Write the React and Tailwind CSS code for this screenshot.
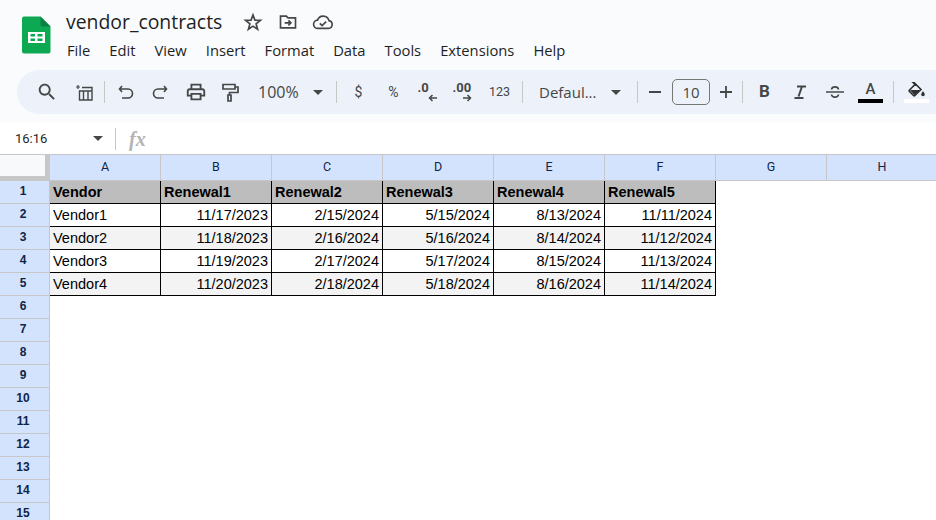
import React from "react";

const columns = ["A", "B", "C", "D", "E", "F", "G", "H"];
const rows = [
  ["Vendor", "Renewal1", "Renewal2", "Renewal3", "Renewal4", "Renewal5"],
  ["Vendor1", "11/17/2023", "2/15/2024", "5/15/2024", "8/13/2024", "11/11/2024"],
  ["Vendor2", "11/18/2023", "2/16/2024", "5/16/2024", "8/14/2024", "11/12/2024"],
  ["Vendor3", "11/19/2023", "2/17/2024", "5/17/2024", "8/15/2024", "11/13/2024"],
  ["Vendor4", "11/20/2023", "2/18/2024", "5/18/2024", "8/16/2024", "11/14/2024"],
];
const menus = ["File", "Edit", "View", "Insert", "Format", "Data", "Tools", "Extensions", "Help"];

const Icon = ({ children, className = "", size = 24, box = 24 }) => (
  <svg width={size} height={size} viewBox={`0 0 ${box} ${box}`} className={`shrink-0 ${className}`} fill="none" stroke="#444746" strokeWidth="2">
    {children}
  </svg>
);

const Solid = ({ d }) => <path d={d} fill="#444746" stroke="none" />;

const Sep = ({ className = "" }) => <div className={`h-[22px] w-px shrink-0 bg-[#c7c7c7] ${className}`} />;

const Caret = ({ className = "" }) => (
  <div className={`h-0 w-0 shrink-0 border-x-[5px] border-t-[5px] border-x-transparent border-t-[#444746] ${className}`} />
);

const Slot = ({ w, children, className = "" }) => (
  <div className={`flex h-full shrink-0 items-center justify-center ${w} ${className}`}>{children}</div>
);

const SheetsLogo = () => (
  <svg width="29" height="38" viewBox="0 0 29 38" className="shrink-0">
    <path d="M2 0.500H18.500L28.500 10.500V35.500a2 2 0 0 1-2 2H2a2 2 0 0 1-2-2V2.500A2 2 0 0 1 2 0.500Z" fill="#0da952" />
    <path d="M18.500 0.500L28.500 10.500H20.500a2 2 0 0 1-2-2Z" fill="#0a8043" />
    <path d="M6 16H23V27H6ZM8.500 18V20.500H13V18ZM15.500 18V20.500H20.500V18ZM8.500 22.500V25H13V22.500ZM15.500 22.500V25H20.500V22.500Z" fill="#fff" fillRule="evenodd" />
  </svg>
);

const Toolbar = () => (
  <div className="mt-[8px] ml-[17px] flex h-[44px] items-center rounded-l-[22px] bg-[#edf2fa] text-[#444746]">
    <Slot w="w-[50px] pl-[9px]">
      <Icon size={22}>
        <Solid d="M15.500 14h-.790l-.280-.270C15.410 12.590 16 11.110 16 9.500 16 5.910 13.090 3 9.500 3S3 5.910 3 9.500 5.910 16 9.500 16c1.610 0 3.090-.590 4.230-1.570l.270.280v.790l5 4.990L20.490 19l-4.990-5zm-6 0C7.010 14 5 11.990 5 9.500S7.010 5 9.500 5 14 7.010 14 9.500 11.990 14 9.500 14z" />
      </Icon>
    </Slot>
    <Slot w="w-[35px]">
      <Icon size={18} box={18} className="mt-[1px]">
        <path d="M6 3.500H16V16H3.500V7H16M7.500 7.500V16M12 7.500V16" strokeWidth="1.400" />
        <path d="M0 3H4M2 1V5" strokeWidth="1.200" />
      </Icon>
    </Slot>
    <Sep className="ml-[2px]" />
    <Slot w="w-[42px]">
      <Icon size={18} box={18}>
        <path d="M5 3L2.500 6 5 9M3 6H11a3.800 3.800 0 0 1 0 9H5" strokeWidth="1.600" />
      </Icon>
    </Slot>
    <Slot w="w-[26px]">
      <Icon size={18} box={18}>
        <path d="M13 3L15.500 6 13 9M15 6H7a3.800 3.800 0 0 0 0 9H13" strokeWidth="1.600" />
      </Icon>
    </Slot>
    <Slot w="w-[45px]">
      <Icon size={22}>
        <Solid d="M19 8h-1V3H6v5H5c-1.660 0-3 1.340-3 3v6h4v4h12v-4h4v-6c0-1.660-1.340-3-3-3zM8 5h8v3H8V5zm8 12v2H8v-4h8v2zm2-2v-2H6v2H4v-4c0-.550.450-1 1-1h14c.550 0 1 .450 1 1v4h-2z" />
      </Icon>
    </Slot>
    <Slot w="w-[23px]">
      <Icon size={20} box={20}>
        <path d="M3 2.500H15V7H3ZM15 5H18V10.500H9.500V13M8 13H11V19H8Z" strokeWidth="1.700" />
      </Icon>
    </Slot>
    <div className="ml-[17px] w-[55px] shrink-0 text-[16px] font-['Open_Sans',sans-serif]">100%</div>
    <Caret />
    <Sep className="ml-[13px]" />
    <Slot w="w-[43px]" className="text-[14px] font-['Roboto',sans-serif]">$</Slot>
    <Slot w="w-[27px]" className="text-[14px] font-['Roboto',sans-serif]">%</Slot>
    <Slot w="w-[43px]">
      <div className="relative h-[22px] w-[24px] font-['Roboto',sans-serif] text-[13px] leading-[14px] font-bold">
        <span className="absolute top-0 left-[1px]">.0</span>
        <svg width="10" height="8" viewBox="0 0 10 8" className="absolute top-[13px] left-[11px]">
          <path d="M9 4H2M4.500 1L1.500 4 4.500 7" fill="none" stroke="#444746" strokeWidth="1.500" />
        </svg>
      </div>
    </Slot>
    <Slot w="w-[27px]">
      <div className="relative h-[22px] w-[24px] font-['Roboto',sans-serif] text-[13px] leading-[14px] font-bold">
        <span className="absolute top-0 left-[1px]">.00</span>
        <svg width="10" height="8" viewBox="0 0 10 8" className="absolute top-[13px] left-[10px]">
          <path d="M1 4H8M5.500 1L8.500 4 5.500 7" fill="none" stroke="#444746" strokeWidth="1.500" />
        </svg>
      </div>
    </Slot>
    <Slot w="w-[45px]" className="text-[12.500px] font-['Roboto',sans-serif]">123</Slot>
    <Sep />
    <div className="ml-[16px] w-[72px] shrink-0 text-[15px] font-['Open_Sans',sans-serif]">Defaul...</div>
    <Caret />
    <Sep className="ml-[16px]" />
    <Slot w="w-[34px]">
      <div className="h-[2px] w-[12px] bg-[#444746]" />
    </Slot>
    <div className="flex h-[26px] w-[38px] shrink-0 items-center justify-center rounded-[5px] border border-[#747775] font-['Open_Sans',sans-serif] text-[15px]">10</div>
    <Slot w="w-[32px]">
      <Icon size={14} box={14}>
        <path d="M1 7H13M7 1V13" strokeWidth="1.800" />
      </Icon>
    </Slot>
    <Sep />
    <Slot w="w-[43px]" className="font-['Roboto',sans-serif] text-[17px] font-bold">B</Slot>
    <Slot w="w-[28px]">
      <Icon size={14} box={14}>
        <path d="M4 1.500H13M9 1.500L5.500 11.500M1.500 13H10.500" strokeWidth="2" />
      </Icon>
    </Slot>
    <Slot w="w-[41px]">
      <Icon size={20} box={20}>
        <path d="M1 10H19" strokeWidth="1.500" />
        <path d="M6.500 7.500C7 4 13 4 13.500 7.500M6.500 12.500C7 16 13 16 13.500 12.500" strokeWidth="1.700" />
      </Icon>
    </Slot>
    <Slot w="w-[31px]">
      <div className="flex flex-col items-center">
        <span className="font-['Roboto',sans-serif] text-[15px] leading-[15px] font-medium">A</span>
        <div className="mt-[2px] h-[4px] w-[25px] bg-black" />
      </div>
    </Slot>
    <Sep className="ml-[7px]" />
    <Slot w="w-[45px]">
      <div className="flex flex-col items-center">
        <svg width="18" height="15" viewBox="0 0 18 15">
          <path d="M5 0.500L7 2.500 1.500 8a1 1 0 0 0 0 1.400L5.500 13.500a1 1 0 0 0 1.400 0L13 7.500 6 0.500Z" fill="none" stroke="#2f2f2f" strokeWidth="1.600" />
          <path d="M2 8H12L6.500 13.300Z" fill="#2f2f2f" />
          <path d="M15 9C15.700 10.300 16.800 11.300 16.800 12.500a1.800 1.800 0 0 1-3.600 0C13.200 11.300 14.300 10.300 15 9Z" fill="#2f2f2f" />
        </svg>
        <div className="mt-[2px] h-[4px] w-[25px] bg-white" />
      </div>
    </Slot>
  </div>
);

const FormulaBar = () => (
  <div className="flex h-[31px] items-center bg-white">
    <div className="ml-[15px] w-[78px] text-[13px] text-[#1f1f1f] font-['Roboto',sans-serif]">16:16</div>
    <Caret />
    <Sep className="ml-[12px] h-[18px]" />
    <span className="ml-[13px] font-['Liberation_Serif',serif] text-[20px] font-bold text-[#b4b4b4] italic">fx</span>
  </div>
);

const Grid = () => (
  <div className="grid grid-cols-[50px_repeat(8,111px)] grid-rows-[26px_repeat(15,23px)] border-t border-[#c7c7c7] font-['Liberation_Sans',sans-serif]">
    <div className="border-r-[5px] border-b-[5px] border-[#c7c7c7] bg-[#f8f9fa]" />
    {columns.map((c) => (
      <div key={c} className="flex items-center justify-center border-r border-b border-[#c7c7c7] bg-[#d3e3fd] font-['Roboto',sans-serif] text-[12.500px] text-[#0f2547]">
        {c}
      </div>
    ))}
    {Array.from({ length: 15 }, (_, r) => (
      <React.Fragment key={r}>
        <div className="flex items-center justify-center border-r border-b border-[#c7c7c7] bg-[#d3e3fd] pr-[3px] pb-[2px] text-[12px] font-bold text-[#0f2547]">
          {r + 1}
        </div>
        {columns.map((c, i) => {
          const text = rows[r] && rows[r][i];
          const header = r === 0;
          if (text === undefined) return <div key={c} className="bg-white" />;
          return (
            <div
              key={c}
              className={`flex items-center overflow-hidden border-r border-b border-black px-[3px] pt-[2px] text-[14.500px] text-black ${
                i > 0 && !header ? "justify-end" : ""
              } ${header ? "bg-[#bdbdbd] font-bold" : r % 2 === 0 ? "bg-[#f3f3f3]" : "bg-white"}`}
            >
              {text}
            </div>
          );
        })}
      </React.Fragment>
    ))}
  </div>
);

export default function App() {
  return (
    <div className="h-[520px] w-[936px] overflow-hidden bg-white">
      <div className="h-[123px] bg-[#f9fbfd]">
        <div className="flex h-[62px] pt-[16px] pl-[22px]">
          <SheetsLogo />
          <div className="ml-[15px] -mt-[6px]">
            <div className="flex items-center">
              <span className="text-[19.400px] leading-[24px] text-[#1f1f1f] font-['Open_Sans',sans-serif]">vendor_contracts</span>
              <svg width="20" height="20" viewBox="0 0 24 24" className="ml-[21px]">
                <path d="M12 3.500L14.300 9.700 21 10 15.700 14.200 17.500 20.700 12 17 6.500 20.700 8.300 14.200 3 10 9.700 9.700Z" fill="none" stroke="#444746" strokeWidth="2" />
              </svg>
              <svg width="20" height="20" viewBox="0 0 24 24" className="ml-[15px]">
                <path d="M3 19V5H10L12 7H21V19ZM8 13H15M12.500 10L15.500 13 12.500 16" fill="none" stroke="#444746" strokeWidth="2" />
              </svg>
              <svg width="22" height="22" viewBox="0 0 24 24" className="ml-[14px]">
                <path d="M6.500 19A4.500 4.500 0 0 1 6 10 6.500 6.500 0 0 1 18.500 10.500 4.300 4.300 0 0 1 18 19ZM8.500 13.500L11 16 15.500 11.500" fill="none" stroke="#444746" strokeWidth="1.800" />
              </svg>
            </div>
            <div className="mt-[6px] ml-[1px] flex gap-[19px] text-[14.750px] leading-[20px] text-[#1f1f1f] font-['Open_Sans',sans-serif]">
              {menus.map((m) => (
                <span key={m}>{m}</span>
              ))}
            </div>
          </div>
        </div>
        <Toolbar />
      </div>
      <FormulaBar />
      <Grid />
    </div>
  );
}
